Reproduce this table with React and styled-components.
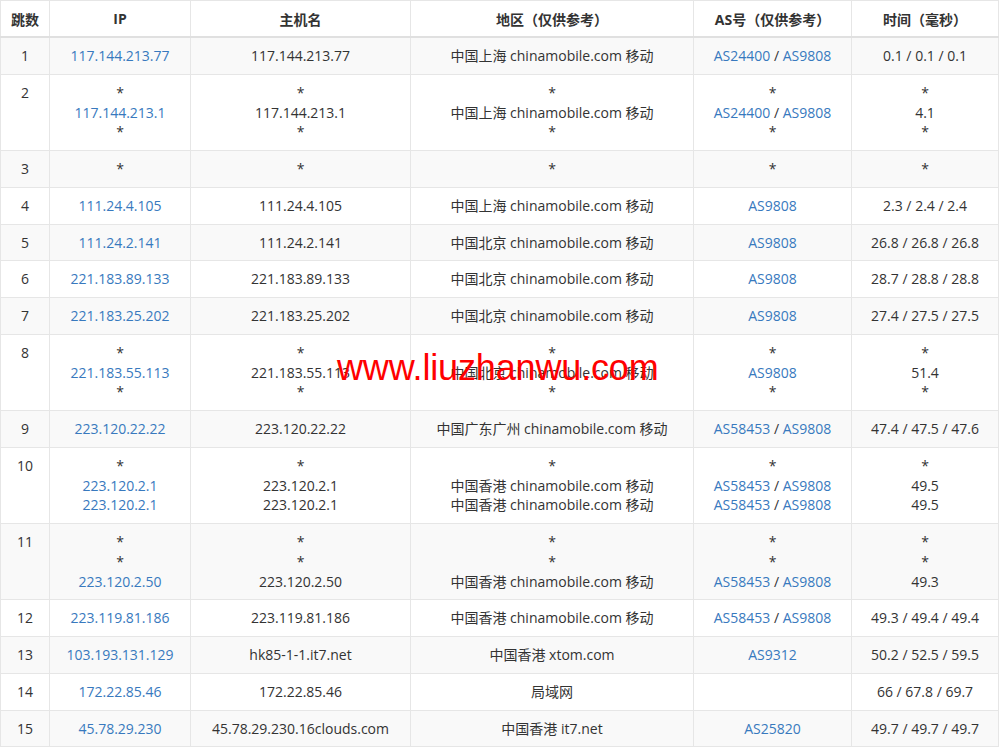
import React from 'react';
import styled, { createGlobalStyle } from 'styled-components';

const GlobalStyle = createGlobalStyle`
    body {
        margin: 0;
        background: #fff;
        font-family: "Open Sans", "Noto Sans CJK SC", sans-serif;
    }
`;

const SEP = ' / ';

// each cell: array of lines
const rows = [
    [['117.144.213.77'], ['117.144.213.77'], ['中国上海 chinamobile.com 移动'], ['AS24400 / AS9808'], ['0.1 / 0.1 / 0.1']],
    [['*', '117.144.213.1', '*'], ['*', '117.144.213.1', '*'], ['*', '中国上海 chinamobile.com 移动', '*'], ['*', 'AS24400 / AS9808', '*'], ['*', '4.1', '*']],
    [['*'], ['*'], ['*'], ['*'], ['*']],
    [['111.24.4.105'], ['111.24.4.105'], ['中国上海 chinamobile.com 移动'], ['AS9808'], ['2.3 / 2.4 / 2.4']],
    [['111.24.2.141'], ['111.24.2.141'], ['中国北京 chinamobile.com 移动'], ['AS9808'], ['26.8 / 26.8 / 26.8']],
    [['221.183.89.133'], ['221.183.89.133'], ['中国北京 chinamobile.com 移动'], ['AS9808'], ['28.7 / 28.8 / 28.8']],
    [['221.183.25.202'], ['221.183.25.202'], ['中国北京 chinamobile.com 移动'], ['AS9808'], ['27.4 / 27.5 / 27.5']],
    [['*', '221.183.55.113', '*'], ['*', '221.183.55.113', '*'], ['*', '中国北京 chinamobile.com 移动', '*'], ['*', 'AS9808', '*'], ['*', '51.4', '*']],
    [['223.120.22.22'], ['223.120.22.22'], ['中国广东广州 chinamobile.com 移动'], ['AS58453 / AS9808'], ['47.4 / 47.5 / 47.6']],
    [['*', '223.120.2.1', '223.120.2.1'], ['*', '223.120.2.1', '223.120.2.1'], ['*', '中国香港 chinamobile.com 移动', '中国香港 chinamobile.com 移动'], ['*', 'AS58453 / AS9808', 'AS58453 / AS9808'], ['*', '49.5', '49.5']],
    [['*', '*', '223.120.2.50'], ['*', '*', '223.120.2.50'], ['*', '*', '中国香港 chinamobile.com 移动'], ['*', '*', 'AS58453 / AS9808'], ['*', '*', '49.3']],
    [['223.119.81.186'], ['223.119.81.186'], ['中国香港 chinamobile.com 移动'], ['AS58453 / AS9808'], ['49.3 / 49.4 / 49.4']],
    [['103.193.131.129'], ['hk85-1-1.it7.net'], ['中国香港 xtom.com'], ['AS9312'], ['50.2 / 52.5 / 59.5']],
    [['172.22.85.46'], ['172.22.85.46'], ['局域网'], [''], ['66 / 67.8 / 69.7']],
    [['45.78.29.230'], ['45.78.29.230.16clouds.com'], ['中国香港 it7.net'], ['AS25820'], ['49.7 / 49.7 / 49.7']],
];

const headers = ['跳数', 'IP', '主机名', '地区（仅供参考）', 'AS号（仅供参考）', '时间（毫秒）'];
const widths = [49, 141, 220, 283, 158, 147];

const renderLine = (line, col) => {
    if (line === '*' || line === '') return line;
    if (col === 0) return <Link>{line}</Link>;
    if (col === 3) {
        return line.split(SEP).map((p, i) => (
            <React.Fragment key={i}>
                {i > 0 && SEP}
                <Link>{p}</Link>
            </React.Fragment>
        ));
    }
    return line;
};

const App = () => {
    return (
        <Wrapper>
            <GlobalStyle />
            <Table>
                <colgroup>
                    {widths.map((w, i) => <col key={i} style={{ width: w }} />)}
                </colgroup>
                <thead>
                    <tr>
                        {headers.map((h) => <Th key={h}>{h}</Th>)}
                    </tr>
                </thead>
                <tbody>
                    {rows.map((r, i) => (
                        <Row key={i} $striped={i % 2 === 0}>
                            <Td>{i + 1}</Td>
                            {r.map((cell, c) => (
                                <Td key={c}>
                                    {cell.map((line, k) => (
                                        <Line key={k}>{renderLine(line, c)}</Line>
                                    ))}
                                </Td>
                            ))}
                        </Row>
                    ))}
                </tbody>
            </Table>
            <Watermark>www.liuzhanwu.com</Watermark>
        </Wrapper>
    );
};

const Wrapper = styled.div`
    position: relative;
    width: 998px;
`;

const Table = styled.table`
    width: 998px;
    table-layout: fixed;
    border-collapse: collapse;
    font-size: 14px;
    color: #333;
    border: 1px solid #e6e6e6;
`;

const Th = styled.th`
    height: 35px;
    padding: 0 6px;
    font-weight: bold;
    text-align: center;
    vertical-align: middle;
    border: 1px solid #e6e6e6;
    border-bottom: 2px solid #e0e0e0;
    background: #fff;
`;

const Row = styled.tr`
    background: ${({ $striped }) => ($striped ? '#f9f9f9' : '#fff')};
`;

const Td = styled.td`
    padding: 8px 4px;
    line-height: 19.75px;
    text-align: center;
    vertical-align: top;
    border: 1px solid #e6e6e6;
    white-space: nowrap;
`;

const Line = styled.div`
    min-height: 19.75px;
`;

const Link = styled.span`
    color: #3879be;
`;

const Watermark = styled.div`
    position: absolute;
    left: 337px;
    top: 347px;
    font-family: "Liberation Sans", Arial, sans-serif;
    font-size: 36px;
    letter-spacing: -0.15px;
    color: #ff0000;
    pointer-events: none;
    white-space: nowrap;
`;

export default App;
